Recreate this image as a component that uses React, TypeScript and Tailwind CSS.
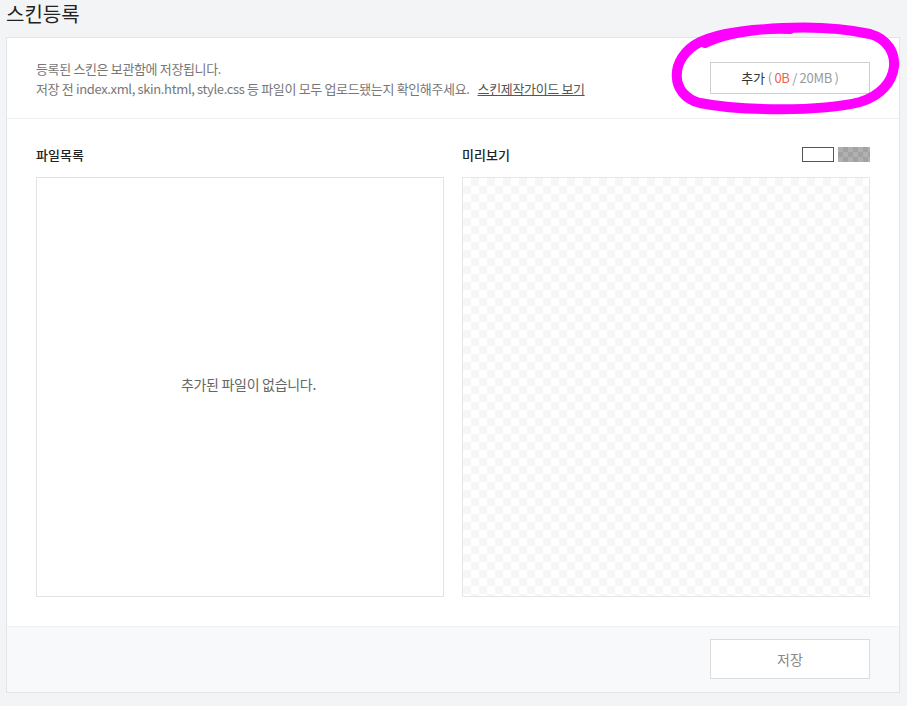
import React from "react";

const FONT = { fontFamily: '"Noto Sans CJK KR", "Noto Sans", sans-serif' };

function Annotation() {
  // hand-drawn magenta circle over the add button
  return (
    <svg
      className="absolute left-0 top-0 pointer-events-none"
      width="907"
      height="130"
      viewBox="0 0 907 130"
    >
      <path
        d="M705 43 C740 26 820 23 870 34 C905 44 902 90 860 102 C820 112 740 111 700 103 C670 96 668 58 700 42 C720 32 760 28 790 29"
        fill="none"
        stroke="#ff00ff"
        strokeWidth="10"
        strokeLinecap="round"
        strokeLinejoin="round"
      />
      <path
        d="M684 96 C698 106 730 110 760 110"
        fill="none"
        stroke="#ff00ff"
        strokeWidth="6"
        strokeLinecap="round"
      />
    </svg>
  );
}

export default function App() {
  return (
    <div className="relative w-[907px] h-[706px] bg-[#f3f4f6] overflow-hidden" style={FONT}>
      {/* Title */}
      <h1 className="pl-[6px] h-[37px] text-[20px] leading-[28px] text-[#222] font-normal">스킨등록</h1>

      {/* Card */}
      <div className="ml-[6px] w-[894px] border border-[#e2e4e8] bg-white">
        {/* Header */}
        <div className="h-[81px] px-[29px] flex items-center justify-between border-b border-[#efefef]">
          <div className="text-[13px] leading-[20px] text-[#777] tracking-[-0.35px] pt-[1px]">
            <p>등록된 스킨은 보관함에 저장됩니다.</p>
            <p>
              저장 전 index.xml, skin.html, style.css 등 파일이 모두 업로드됐는지 확인해주세요.
              <a className="ml-[8px] underline text-[#555] cursor-pointer">스킨제작가이드 보기</a>
            </p>
          </div>
          <button className="w-[160px] h-[32px] border border-[#cfcfcf] bg-white text-[13px] tracking-[-0.3px] text-[#333] flex items-center justify-center gap-[3px]">
            <span>추가</span>
            <span className="text-[#999]">
              ( <span className="text-[#f0604d]">0B</span> / 20MB )
            </span>
          </button>
        </div>

        {/* Body */}
        <div className="px-[29px] pt-[26px] pb-[29px] grid grid-cols-2 gap-x-[18px]">
          <div className="flex flex-col">
            <div className="h-[32px] flex items-start text-[13px] leading-[20px] text-[#222] font-medium">파일목록</div>
            <div className="h-[420px] border border-[#e3e3e3] flex items-center justify-center text-[14px] tracking-[-0.3px] text-[#666] pl-[17px] pb-[5px]">
              추가된 파일이 없습니다.
            </div>
          </div>
          <div className="flex flex-col">
            <div className="h-[32px] flex items-start justify-between text-[13px] leading-[20px] text-[#222] font-medium">
              <span>미리보기</span>
              <div className="flex gap-[4px] mt-[2px]">
                <button className="w-[32px] h-[15px] border border-[#555] bg-white" />
                <button className="w-[32px] h-[15px] bg-[#a8a8a8] bg-[conic-gradient(#a2a2a2_25%,#b0b0b0_0_50%,#a2a2a2_0_75%,#b0b0b0_0)] bg-[length:10px_10px]" />
              </div>
            </div>
            <div className="h-[420px] border border-[#e6e6e6] bg-[conic-gradient(#f6f6f6_25%,#ffffff_0_50%,#f6f6f6_0_75%,#ffffff_0)] bg-[length:16px_16px]" />
          </div>
        </div>

        {/* Footer */}
        <div className="h-[66px] bg-[#f8f9fa] border-t border-[#eef0f2] px-[29px] flex justify-end pt-[12px]">
          <button className="w-[160px] h-[40px] border border-[#dcdcdc] bg-white text-[14px] text-[#888]">저장</button>
        </div>
      </div>

      <Annotation />
    </div>
  );
}
